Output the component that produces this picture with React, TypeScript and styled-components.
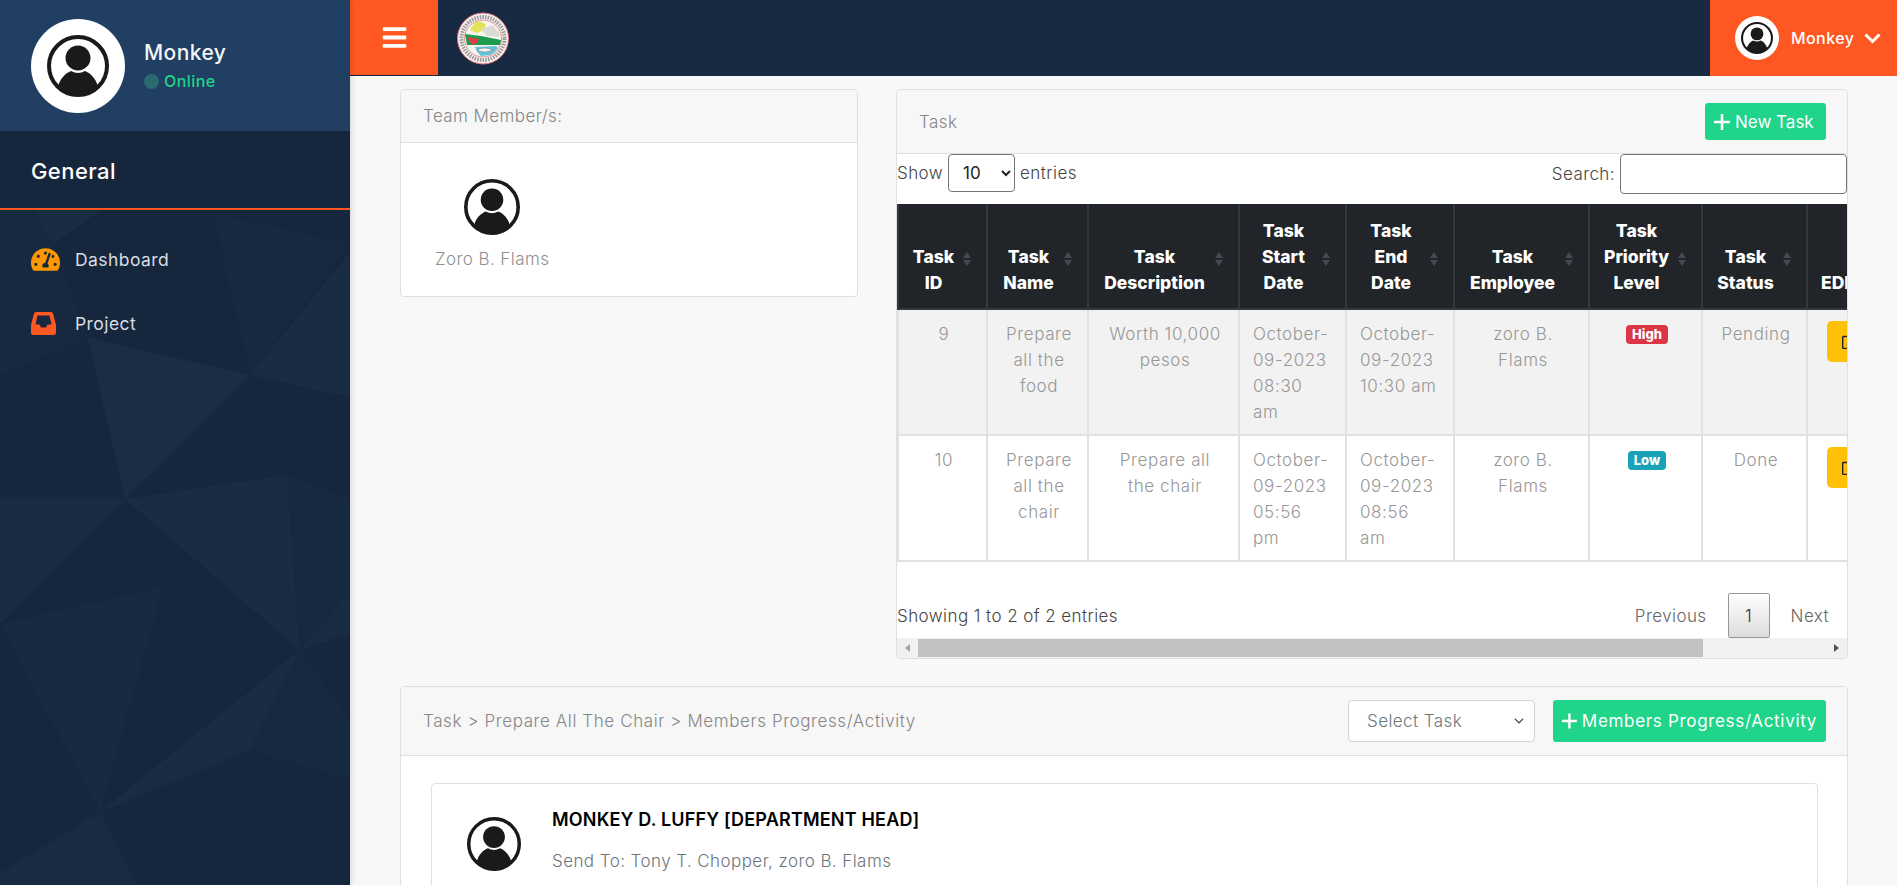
import React from 'react'
import styled, { createGlobalStyle } from 'styled-components'
import { FaBars, FaRegEdit, FaTachometerAlt } from 'react-icons/fa'

const GlobalStyle = createGlobalStyle`
  html, body { margin: 0; height: 100%; overflow: hidden; }
  body { font-family: "Inter", "Liberation Sans", sans-serif; font-size: 17px; letter-spacing: .025em; background: #f8f8f8; }
  * { box-sizing: border-box; }
`

const ORANGE = '#ff5722'
const GREEN = '#20d489'

const headers = [
  { label: 'Task\nID', width: 89 },
  { label: 'Task\nName', width: 101 },
  { label: 'Task\nDescription', width: 151 },
  { label: 'Task\nStart\nDate', width: 107 },
  { label: 'Task\nEnd\nDate', width: 108 },
  { label: 'Task\nEmployee', width: 135 },
  { label: 'Task\nPriority\nLevel', width: 113 },
  { label: 'Task\nStatus', width: 105 },
  { label: 'EDIT', width: 110, plain: true },
]

const rows = [
  {
    id: '9', name: 'Prepare\nall the\nfood', desc: 'Worth 10,000\npesos',
    start: 'October-\n09-2023\n08:30\nam', end: 'October-\n09-2023\n10:30 am',
    employee: 'zoro B.\nFlams', level: 'High', status: 'Pending',
  },
  {
    id: '10', name: 'Prepare\nall the\nchair', desc: 'Prepare all\nthe chair',
    start: 'October-\n09-2023\n05:56\npm', end: 'October-\n09-2023\n08:56\nam',
    employee: 'zoro B.\nFlams', level: 'Low', status: 'Done',
  },
]

// low-poly shapes of the sidebar background
const polygons = [
  { points: '88,338 250,375 125,499', fill: '#1a2d43' },
  { points: '125,499 287,475 300,650', fill: '#1a2c42' },
  { points: '0,624 125,499 0,499', fill: '#1a2c42' },
  { points: '0,624 163,587 100,812', fill: '#172a3f' },
  { points: '100,812 300,650 250,750', fill: '#1a2c42' },
  { points: '0,873 100,812 137,885 0,885', fill: '#192b41' },
  { points: '250,375 350,252 350,397', fill: '#1a2c42' },
  { points: '287,475 350,499 350,593 300,650', fill: '#17293f' },
  { points: '213,213 350,244 250,375', fill: '#17293f' },
  { points: '33,209 53,244 103,209', fill: '#1a2c42' },
  { points: '300,650 350,593 350,633', fill: '#1a2c42' },
  { points: '0,375 88,338 53,244 33,209 0,209', fill: '#17293f' },
  { points: '250,750 350,780 350,720 300,650', fill: '#17293f' },
]

const UserIcon = ({ size }: { size: number }) => (
  <svg width={size} height={size} viewBox="0 0 62 62">
    <circle cx="31" cy="31" r="29" fill="#fff" stroke="#1a1a1a" strokeWidth="4" />
    <circle cx="31" cy="23" r="12.5" fill="#1a1a1a" />
    <path d="M11 52 C13 43 19 38 24 36 Q31 40 38 36 C43 38 49 43 51 52 A29 29 0 0 1 11 52 Z" fill="#1a1a1a" />
  </svg>
)

const Seal = () => (
  <svg width="52" height="53" viewBox="0 0 52 53">
    <circle cx="26" cy="26.5" r="25.5" fill="#fdf6f4" stroke="#e2747a" strokeWidth="1" />
    <circle cx="26" cy="26.5" r="21.5" fill="none" stroke="#9a9a9a" strokeWidth="4" strokeDasharray="1.6 1.1" />
    <circle cx="26" cy="26.5" r="18.5" fill="#f6f6f0" stroke="#d9737a" strokeWidth=".8" />
    <path d="M13 18 L18 10 L24 9.5 L29 13 L27 18 L20 21 Z" fill="#e5e25a" />
    <path d="M24 17 L36 13 L43 22 L42 25 L30 24 Z" fill="#dcdcd6" />
    <path d="M8 22 L24 24 L44 28 L43 33 L26 33 L10 33 Z" fill="#1c9c4c" />
    <path d="M10 25 L22 27 L20 31 L15 33 Z" fill="#e63a48" />
    <path d="M18 35 L39 34 L41 36 A18 18 0 0 1 33 43 L24 44 A18 18 0 0 1 18 35 Z" fill="#63c3d8" />
    <path d="M20 38 Q27 34 36 38 Q27 42 20 38 Z" fill="#f2f2ee" stroke="#777" strokeWidth=".5" />
  </svg>
)

const TrayIcon = () => (
  <svg width="25" height="23" viewBox="0 0 25 23" fill="currentColor">
    <path
      fillRule="evenodd"
      d="M5 0 H20 Q21.5 0 22 1.5 L25 13 V20.5 Q25 23 22.5 23 H2.5 Q0 23 0 20.5 V13 L3 1.5 Q3.5 0 5 0 Z M6.5 3.5 L4.5 12.5 H8.5 L10 15.5 H15 L16.5 12.5 H20.5 L18.5 3.5 Z"
    />
  </svg>
)

const PlusIcon = () => (
  <svg width="16" height="16" viewBox="0 0 16 16">
    <path d="M8 0 V16 M0 8 H16" stroke="currentColor" strokeWidth="2.6" />
  </svg>
)

const Chevron = () => (
  <svg width="17" height="11" viewBox="0 0 17 11">
    <path d="M1.5 1.5 L8.5 8.5 L15.5 1.5" fill="none" stroke="currentColor" strokeWidth="3" />
  </svg>
)

const App = () => {
  return (
    <Page>
      <GlobalStyle />
      <Sidebar>
        <Facets viewBox="0 0 350 885" width="350" height="885">
          {polygons.map((p, index) => <polygon key={index} points={p.points} fill={p.fill} />)}
        </Facets>
        <Profile>
          <ProfilePhoto><UserIcon size={62} /></ProfilePhoto>
          <div>
            <ProfileName>Monkey</ProfileName>
            <OnlineRow><OnlineDot />Online</OnlineRow>
          </div>
        </Profile>
        <SectionTitle>General</SectionTitle>
        <Nav>
          <NavItem>
            <NavIcon $color="#ff9800"><FaTachometerAlt size={29} /></NavIcon>
            Dashboard
          </NavItem>
          <NavItem>
            <NavIcon $color={ORANGE}><TrayIcon /></NavIcon>
            Project
          </NavItem>
        </Nav>
      </Sidebar>

      <Content>
        <Topbar>
          <Burger><FaBars size={27} /></Burger>
          <LogoBox><Seal /></LogoBox>
          <UserMenu>
            <UserPhoto><UserIcon size={32} /></UserPhoto>
            <UserName>Monkey</UserName>
            <Chevron />
          </UserMenu>
        </Topbar>

        <Main>
          <Columns>
            <TeamCard>
              <CardHeader $height={53}>Team Member/s:</CardHeader>
              <TeamBody>
                <Member>
                  <UserIcon size={56} />
                  <MemberName>Zoro B. Flams</MemberName>
                </Member>
              </TeamBody>
            </TeamCard>

            <Card>
              <CardHeader $height={64}>
                Task
                <AddButton $height={37} $width={121} $spacing={0}><PlusIcon />New Task</AddButton>
              </CardHeader>
              <TableTools>
                <ToolLabel>
                  Show
                  <LengthSelect defaultValue="10">
                    <option>10</option>
                    <option>25</option>
                  </LengthSelect>
                  entries
                </ToolLabel>
                <ToolLabel>
                  Search:
                  <SearchInput />
                </ToolLabel>
              </TableTools>
              <TableClip>
                <Table>
                  <colgroup>
                    {headers.map((h) => <col key={h.label} width={h.width} />)}
                  </colgroup>
                  <thead>
                    <tr>
                      {headers.map((h) => (
                        <Th key={h.label} $sortable={!h.plain}>{h.label}</Th>
                      ))}
                    </tr>
                  </thead>
                  <tbody>
                    {rows.map((row, index) => (
                      <Tr key={row.id} $striped={index === 0}>
                        <Td>{row.id}</Td>
                        <Td>{row.name}</Td>
                        <Td>{row.desc}</Td>
                        <Td $left>{row.start}</Td>
                        <Td $left>{row.end}</Td>
                        <Td>{row.employee}</Td>
                        <Td><Badge $color={row.level === 'High' ? '#dc3545' : '#17a2b8'}>{row.level}</Badge></Td>
                        <Td>{row.status}</Td>
                        <Td $left $edit><EditButton><FaRegEdit size={17} /></EditButton></Td>
                      </Tr>
                    ))}
                  </tbody>
                </Table>
              </TableClip>
              <TableFooter>
                <ShowingText>Showing 1 to 2 of 2 entries</ShowingText>
                <Pagination>
                  <PageLink>Previous</PageLink>
                  <PageCurrent>1</PageCurrent>
                  <PageLink>Next</PageLink>
                </Pagination>
              </TableFooter>
              <ScrollTrack>
                <ScrollArrow $side="left" />
                <ScrollThumb />
                <ScrollArrow $side="right" />
              </ScrollTrack>
            </Card>
          </Columns>

          <ProgressCard>
            <CardHeader $height={69}>
              <Crumbs>Task &gt; Prepare All The Chair &gt; Members Progress/Activity</Crumbs>
              <HeaderActions>
                <TaskSelect defaultValue="">
                  <option value="">Select Task</option>
                </TaskSelect>
                <AddButton $height={42} $width={273} $spacing={0.04}><PlusIcon />Members Progress/Activity</AddButton>
              </HeaderActions>
            </CardHeader>
            <ProgressBody>
              <Activity>
                <UserIcon size={54} />
                <div>
                  <ActivityTitle>MONKEY D. LUFFY [DEPARTMENT HEAD]</ActivityTitle>
                  <ActivityMeta>Send To: Tony T. Chopper, zoro B. Flams</ActivityMeta>
                </div>
              </Activity>
            </ProgressBody>
          </ProgressCard>
        </Main>
      </Content>
    </Page>
  )
}

export default App

const Page = styled.div`
  display: flex;
  height: 885px;
  overflow: hidden;
`

const Sidebar = styled.aside`
  position: relative;
  flex: 0 0 350px;
  background: #16273d;
  box-shadow: 2px 0 5px rgba(0, 0, 0, .12);
  z-index: 2;
`

const Facets = styled.svg`
  position: absolute;
  left: 0;
  top: 0;
`

const Profile = styled.div`
  position: relative;
  display: flex;
  align-items: center;
  gap: 19px;
  height: 131px;
  padding-left: 31px;
  background: #213f62;
`

const ProfilePhoto = styled.div`
  display: flex;
  align-items: center;
  justify-content: center;
  width: 94px;
  height: 94px;
  border-radius: 50%;
  background: #fff;
`

const ProfileName = styled.div`
  color: #f3f5f8;
  font-size: 21px;
  font-weight: 500;
  line-height: 30px;
`

const OnlineRow = styled.div`
  display: flex;
  align-items: center;
  gap: 5px;
  padding-top: 1px;
  color: ${GREEN};
  font-size: 16px;
  font-weight: 500;
  line-height: 24px;
`

const OnlineDot = styled.span`
  width: 15px;
  height: 15px;
  border-radius: 50%;
  background: #2a6a70;
`

const SectionTitle = styled.div`
  position: relative;
  display: flex;
  align-items: center;
  height: 79px;
  padding: 2px 0 0 31px;
  border-bottom: 2px solid ${ORANGE};
  color: #fff;
  font-size: 22px;
  font-weight: 500;
`

const Nav = styled.nav`
  position: relative;
  display: flex;
  flex-direction: column;
  gap: 24px;
  padding: 29px 0 0 31px;
`

const NavItem = styled.a`
  display: flex;
  align-items: center;
  height: 40px;
  color: #d8dde3;
  font-size: 17.5px;
`

const NavIcon = styled.span<{ $color: string }>`
  display: flex;
  align-items: center;
  width: 44px;
  color: ${(p) => p.$color};
`

const Content = styled.div`
  flex: 1;
  min-width: 0;
  display: flex;
  flex-direction: column;
`

const Topbar = styled.header`
  display: flex;
  align-items: stretch;
  flex: 0 0 76px;
  background: #172a41;
`

const Burger = styled.div`
  display: flex;
  align-items: center;
  justify-content: center;
  width: 88px;
  height: 75px;
  background: ${ORANGE};
  color: #fff;
`

const LogoBox = styled.div`
  display: flex;
  align-items: center;
  padding-left: 19px;
  flex: 1;
`

const UserMenu = styled.div`
  display: flex;
  align-items: center;
  width: 187px;
  padding-left: 25px;
  background: ${ORANGE};
  color: #fff;
`

const UserPhoto = styled.div`
  display: flex;
  align-items: center;
  justify-content: center;
  width: 44px;
  height: 44px;
  border-radius: 50%;
  background: #fff;
`

const UserName = styled.span`
  margin: 0 10px 0 12px;
  font-size: 16px;
  font-weight: 500;
`

const Main = styled.main`
  display: flex;
  flex-direction: column;
  gap: 27px;
  padding: 13px 49px 0 50px;
`

const Columns = styled.div`
  display: grid;
  grid-template-columns: 458px 952px;
  column-gap: 38px;
  align-items: start;
`

const Card = styled.section`
  border: 1px solid #dfdfdf;
  border-radius: 4px;
  background: #fff;
  overflow: hidden;
`

const TeamCard = styled(Card)`
  height: 208px;
`

const ProgressCard = styled(Card)`
  height: 300px;
`

const CardHeader = styled.div<{ $height: number }>`
  display: flex;
  align-items: center;
  justify-content: space-between;
  height: ${(p) => p.$height}px;
  padding: 0 21px 0 22px;
  border-bottom: 1px solid #dfdfdf;
  background: #f7f7f7;
  color: #868686;
  font-weight: 300;
`

const Crumbs = styled.span`
  letter-spacing: .035em;
`

const AddButton = styled.button<{ $height: number; $width: number; $spacing: number }>`
  display: flex;
  align-items: center;
  gap: 5px;
  width: ${(p) => p.$width}px;
  height: ${(p) => p.$height}px;
  padding: 0 9px;
  border: 0;
  border-radius: 3px;
  background: ${GREEN};
  color: #fff;
  font-family: inherit;
  font-size: 17px;
  letter-spacing: ${(p) => p.$spacing}em;
  white-space: nowrap;
`

const TeamBody = styled.div`
  padding: 36px 0 0 34px;
`

const Member = styled.div`
  display: inline-flex;
  flex-direction: column;
  align-items: center;
  gap: 14px;
`

const MemberName = styled.span`
  color: #8f8f8f;
  font-weight: 300;
`

const TableTools = styled.div`
  display: flex;
  justify-content: space-between;
  align-items: flex-start;
  height: 50px;
`

const ToolLabel = styled.label`
  display: flex;
  align-items: center;
  gap: 5px;
  color: #444;
  font-weight: 300;
`

const LengthSelect = styled.select`
  width: 67px;
  height: 38px;
  padding-left: 10px;
  border: 1px solid #767676;
  border-radius: 4px;
  background: #fff;
  font-family: inherit;
  font-size: 17px;
  color: #222;
`

const SearchInput = styled.input`
  width: 227px;
  height: 40px;
  border: 1px solid #767676;
  border-radius: 4px;
  background: #fff;
`

const TableClip = styled.div`
  overflow: hidden;
`

const Table = styled.table`
  width: 1019px;
  table-layout: fixed;
  border-collapse: collapse;
`

const Th = styled.th<{ $sortable?: boolean }>`
  position: relative;
  height: 105px;
  padding: 0 ${(p) => (p.$sortable ? 28 : 0)}px 12px ${(p) => (p.$sortable ? 10 : 13)}px;
  border: 2px solid #32383e;
  border-top: 0;
  background: #212529;
  color: #fff;
  font-size: 17.5px;
  font-weight: 800;
  line-height: 26px;
  letter-spacing: 0;
  white-space: pre-line;
  vertical-align: bottom;
  text-align: ${(p) => (p.$sortable ? 'center' : 'left')};
  &::before, &::after {
    content: '';
    display: ${(p) => (p.$sortable ? 'block' : 'none')};
    position: absolute;
    right: 15px;
    border-left: 4px solid transparent;
    border-right: 4px solid transparent;
  }
  &::before { top: 48px; border-bottom: 6px solid #454a50; }
  &::after { top: 56px; border-top: 6px solid #454a50; }
`

const Tr = styled.tr<{ $striped?: boolean }>`
  background: ${(p) => (p.$striped ? '#f2f2f2' : '#fff')};
  & + & td { height: 127px; }
`

const Td = styled.td<{ $left?: boolean; $edit?: boolean }>`
  height: 126px;
  padding: 11px 10px 0 ${(p) => (p.$edit ? 19 : 13)}px;
  border: 2px solid #dee2e6;
  color: #979797;
  font-weight: 300;
  line-height: 26px;
  letter-spacing: .035em;
  vertical-align: top;
  white-space: pre-line;
  text-align: ${(p) => (p.$left ? 'left' : 'center')};
`

const Badge = styled.span<{ $color: string }>`
  display: inline-block;
  padding: 0 6px;
  border-radius: 4px;
  background: ${(p) => p.$color};
  color: #fff;
  font-size: 13px;
  font-weight: 800;
  line-height: 19px;
  letter-spacing: 0;
  vertical-align: 1px;
`

const EditButton = styled.div`
  display: flex;
  align-items: center;
  width: 60px;
  height: 41px;
  padding-left: 15px;
  border-radius: 5px;
  background: #ffc107;
  color: #212529;
`

const TableFooter = styled.div`
  display: flex;
  justify-content: space-between;
  align-items: center;
  height: 45px;
  margin-top: 31px;
  padding-right: 18px;
`

const ShowingText = styled.span`
  color: #444;
  font-weight: 300;
`

const Pagination = styled.div`
  display: flex;
  align-items: center;
  gap: 21px;
`

const PageLink = styled.span`
  color: #666;
  font-weight: 300;
`

const PageCurrent = styled.span`
  display: flex;
  align-items: center;
  justify-content: center;
  width: 42px;
  height: 45px;
  border: 1px solid #979797;
  border-radius: 2px;
  background: linear-gradient(#fff, #dcdcdc);
  color: #333;
  font-weight: 300;
`

const ScrollTrack = styled.div`
  display: flex;
  align-items: center;
  height: 20px;
  background: #f1f1f1;
`

const ScrollThumb = styled.div`
  width: 785px;
  height: 18px;
  background: #c1c1c1;
`

const ScrollArrow = styled.span<{ $side: 'left' | 'right' }>`
  flex: 0 0 21px;
  display: flex;
  justify-content: center;
  margin-left: ${(p) => (p.$side === 'right' ? 'auto' : 0)};
  &::before {
    content: '';
    border-top: 4px solid transparent;
    border-bottom: 4px solid transparent;
    ${(p) => (p.$side === 'left' ? 'border-right: 5px solid #a3a3a3;' : 'border-left: 5px solid #505050;')}
  }
`

const HeaderActions = styled.div`
  display: flex;
  align-items: center;
  gap: 18px;
`

const TaskSelect = styled.select`
  width: 187px;
  height: 42px;
  padding-left: 18px;
  border: 1px solid #ced4da;
  border-radius: 4px;
  appearance: none;
  background: #fff url("data:image/svg+xml,%3csvg xmlns='http://www.w3.org/2000/svg' viewBox='0 0 16 16'%3e%3cpath fill='none' stroke='%23343a40' stroke-linecap='round' stroke-linejoin='round' stroke-width='2' d='M2 5l6 6 6-6'/%3e%3c/svg%3e") no-repeat right 9px center / 12px 10px;
  color: #6c757d;
  font-family: inherit;
  font-size: 17px;
  font-weight: 300;
  letter-spacing: .025em;
`

const ProgressBody = styled.div`
  padding: 27px 29px 0 30px;
`

const Activity = styled.article`
  display: flex;
  gap: 31px;
  height: 200px;
  padding: 33px 35px 0 35px;
  border: 1px solid #dfdfdf;
  border-radius: 4px;
`

const ActivityTitle = styled.h4`
  margin: -11px 0 0;
  color: #000;
  font-size: 18px;
  font-weight: 600;
  line-height: 27px;
  letter-spacing: .01em;
`

const ActivityMeta = styled.p`
  margin: 15px 0 0;
  color: #6c757d;
  font-weight: 300;
  line-height: 26px;
`
